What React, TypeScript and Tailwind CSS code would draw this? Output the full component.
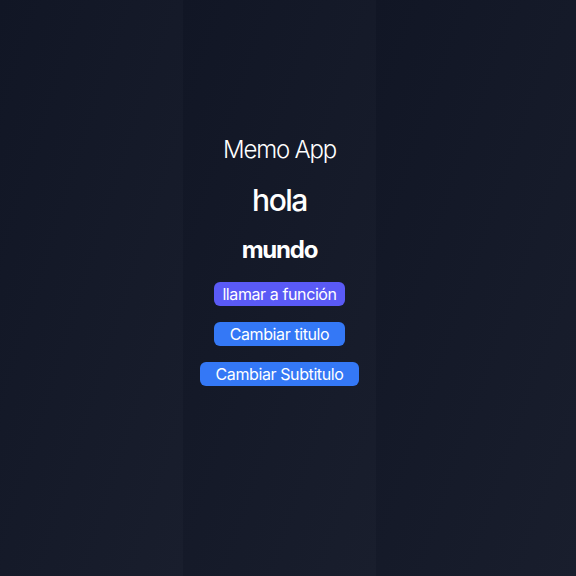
import React, { useState, useCallback } from 'react';

const Band: React.FC<{ className?: string; children?: React.ReactNode }> = ({ className = '', children }) => (
  <div className={`h-full bg-gradient-to-br from-[#111625] to-[#191e2d] ${className}`}>{children}</div>
);

export default function App() {
  const [title, setTitle] = useState('hola');
  const [subtitle, setSubtitle] = useState('mundo');

  const callFn = useCallback(() => {
    console.log('función llamada');
  }, []);

  return (
    <div className="flex h-[576px] w-full overflow-hidden font-['Inter',sans-serif] text-white">
      <Band className="w-[183px]" />
      <Band className="w-[193px]">
        <div className="flex flex-col items-center gap-4 pt-[134px]">
          <h1 className="text-2xl font-light tracking-tighter">Memo App</h1>
          <h2 className="text-3xl font-medium tracking-tighter">{title}</h2>
          <h3 className="text-2xl font-bold tracking-tighter">{subtitle}</h3>
          <button onClick={callFn} className="rounded-md bg-[#5a5af6] px-2 text-base tracking-tight whitespace-nowrap">
            llamar a función
          </button>
          <button onClick={() => setTitle('adios')} className="rounded-md bg-[#3478f6] px-4 text-base tracking-tight whitespace-nowrap">
            Cambiar titulo
          </button>
          <button onClick={() => setSubtitle('mundo!')} className="rounded-md bg-[#3478f6] px-4 text-base tracking-tight whitespace-nowrap">
            Cambiar Subtitulo
          </button>
        </div>
      </Band>
      <Band className="flex-1" />
    </div>
  );
}
